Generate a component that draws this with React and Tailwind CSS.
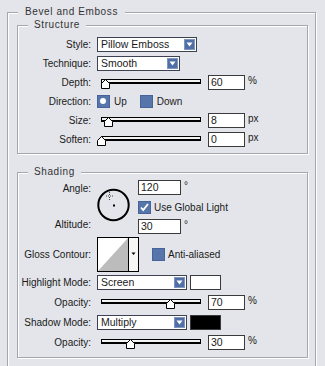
import React from 'react';

// Photoshop "Bevel and Emboss" layer style panel

const GroupBox = ({ title, titleClass, className, children }) => (
	<div className={`relative border border-[#a4a8ae] shadow-[inset_1px_1px_0_#fff,1px_1px_0_#fff] ${className}`}>
		<span className={`absolute left-[10px] top-[-7px] bg-[#e3e5ea] text-[10px] leading-[12px] tracking-[0.6px] text-[#333] ${titleClass}`}>
			{title}
		</span>
		{children}
	</div>
);

const Label = ({ children }) => (
	<span className="w-[73px] shrink-0 text-right text-[10px] leading-[12px] text-[#1a1a1a]">{children}</span>
);

const ArrowButton = () => (
	<svg width="11" height="11" viewBox="0 0 11 11" className="mr-[1px] shrink-0">
		<rect x="0" y="0" width="11" height="11" fill="#4f6fa6" />
		<rect x="0.5" y="0.5" width="10" height="10" fill="none" stroke="#7d96c0" />
		<path d="M2.5 3.5 H8.5 L5.5 7.5 Z" fill="#fff" />
	</svg>
);

const Select = ({ value, width }) => (
	<div className={`flex h-[15px] items-center border border-[#3c4252] bg-white ${width}`}>
		<span className="flex-1 pl-[3px] text-[10.5px] leading-[13px] text-[#1a1a1a]">{value}</span>
		<ArrowButton />
	</div>
);

const NumInput = ({ value, width }) => (
	<div className={`h-[15px] shrink-0 border border-[#3a3a3a] bg-white pl-[2px] text-[10.5px] leading-[13px] text-[#1a1a1a] ${width}`}>
		{value}
	</div>
);

const Slider = ({ pos }) => (
	<div className="relative h-[15px] w-[108px] shrink-0">
		<div className="ml-[4px] mt-[4px] h-[5px] w-[100px] border border-b-2 border-black bg-[#f3f3f3]" />
		<svg className="absolute top-[4px]" style={{ left: pos }} width="9" height="10" viewBox="0 0 9 10">
			<path d="M4.5 0.5 L8.5 4.5 V9.5 H0.5 V4.5 Z" fill="#fff" stroke="#000" />
		</svg>
	</div>
);

const Unit = ({ children }) => (
	<span className="ml-[3px] self-start text-[10px] leading-[12px] text-[#1a1a1a]">{children}</span>
);

const BlueBox = ({ children }) => (
	<svg width="13" height="13" viewBox="0 0 13 13" className="shrink-0">
		<rect x="0" y="0" width="13" height="13" fill="#5675aa" />
		<rect x="0.5" y="0.5" width="12" height="12" fill="none" stroke="#46639a" />
		{children}
	</svg>
);

const SliderRow = ({ label, pos, value, unit }) => (
	<div className="flex h-[15px] items-center gap-[6px]">
		<Label>{label}</Label>
		<div className="flex items-center">
			<Slider pos={pos} />
			<div className="ml-[3px]">
				<NumInput value={value} width="w-[37px]" />
			</div>
			<Unit>{unit}</Unit>
		</div>
	</div>
);

const AngleDial = () => (
	<svg width="33" height="34" viewBox="0 0 33 34">
		<circle cx="16.5" cy="17" r="15.2" fill="none" stroke="#000" strokeWidth="2" />
		<rect x="16" y="16.5" width="2" height="2" fill="#000" />
		<path d="M12.5 4 V7 M12.5 9 V12 M9 8 H12 M13 8 H16" stroke="#444" strokeWidth="1" strokeDasharray="1 1" />
	</svg>
);

const ContourBox = () => (
	<svg width="42" height="35" viewBox="0 0 42 35" className="shrink-0">
		<rect x="0.5" y="0.5" width="41" height="34" fill="#fff" stroke="#000" />
		<path d="M1 34 L31 1 V34 Z" fill="#bcbcbc" />
		<path d="M31.5 0.5 V34.5" stroke="#000" />
		<rect x="32" y="1" width="9" height="33" fill="#f6f6f6" />
		<path d="M34.5 15.5 H38.5 L36.5 18 Z" fill="#000" />
	</svg>
);

const Swatch = ({ color }) => (
	<div className={`ml-[3px] h-[15px] w-[31px] border border-[#3a3a3a] ${color}`} />
);

const App = () => {
	return (
		<div className="h-[366px] overflow-hidden bg-[#e3e5ea] pl-[7px] pt-[12px] font-['Liberation_Sans',Arial,sans-serif]">
			<GroupBox title="Bevel and Emboss" titleClass="px-[7px]" className="w-[309px] pl-[9px] pt-[12px] pb-[20px]">
				<GroupBox title="Structure" titleClass="px-[6px]" className="w-[291px] pt-[11px] pb-[6px]">
					<div className="flex flex-col gap-[4px]">
						<div className="flex h-[15px] items-center gap-[6px]">
							<Label>Style:</Label>
							<Select value="Pillow Emboss" width="w-[100px]" />
						</div>
						<div className="flex h-[15px] items-center gap-[6px]">
							<Label>Technique:</Label>
							<Select value="Smooth" width="w-[83px]" />
						</div>
						<SliderRow label="Depth:" pos={4} value="60" unit="%" />
						<div className="flex h-[15px] items-center gap-[6px]">
							<Label>Direction:</Label>
							<div className="flex items-center">
								<BlueBox>
									<circle cx="6" cy="6" r="3" fill="#fff" />
								</BlueBox>
								<span className="ml-[4px] text-[10px] leading-[12px] text-[#1a1a1a]">Up</span>
								<span className="ml-[13px]">
									<BlueBox />
								</span>
								<span className="ml-[4px] text-[10px] leading-[12px] text-[#1a1a1a]">Down</span>
							</div>
						</div>
						<SliderRow label="Size:" pos={7} value="8" unit="px" />
						<SliderRow label="Soften:" pos={0} value="0" unit="px" />
					</div>
				</GroupBox>

				<GroupBox title="Shading" titleClass="px-[6px]" className="mt-[18px] w-[291px] pt-[7px] pb-[7px]">
					<div className="flex">
						<div className="flex h-[53px] w-[73px] shrink-0 flex-col justify-between pt-[3px] pb-[2px] text-right text-[10px] leading-[12px] text-[#1a1a1a]">
							<span>Angle:</span>
							<span>Altitude:</span>
						</div>
						<div className="ml-[6px] mt-[8px]">
							<AngleDial />
						</div>
						<div className="ml-[8px] flex flex-col">
							<div className="flex">
								<NumInput value="120" width="w-[43px]" />
								<Unit>°</Unit>
							</div>
							<div className="mt-[6px] flex items-center">
								<BlueBox>
									<path d="M3 6.5 L5.2 9 L10 3" fill="none" stroke="#fff" strokeWidth="1.8" />
								</BlueBox>
								<span className="ml-[3px] text-[10px] leading-[12px] text-[#1a1a1a]">Use Global Light</span>
							</div>
							<div className="mt-[5px] flex">
								<NumInput value="30" width="w-[43px]" />
								<Unit>°</Unit>
							</div>
						</div>
					</div>

					<div className="mt-[3px] flex h-[35px] items-center gap-[6px]">
						<Label>Gloss Contour:</Label>
						<ContourBox />
						<span className="ml-[7px]">
							<BlueBox />
						</span>
						<span className="ml-[-3px] text-[10px] leading-[12px] text-[#1a1a1a]">Anti-aliased</span>
					</div>

					<div className="mt-[3px] flex flex-col gap-[5px]">
						<div className="flex h-[15px] items-center gap-[6px]">
							<Label>Highlight Mode:</Label>
							<div className="flex items-center">
								<Select value="Screen" width="w-[90px]" />
								<Swatch color="bg-white" />
							</div>
						</div>
						<SliderRow label="Opacity:" pos={69} value="70" unit="%" />
						<div className="flex h-[15px] items-center gap-[6px]">
							<Label>Shadow Mode:</Label>
							<div className="flex items-center">
								<Select value="Multiply" width="w-[90px]" />
								<Swatch color="bg-black" />
							</div>
						</div>
						<SliderRow label="Opacity:" pos={29} value="30" unit="%" />
					</div>
				</GroupBox>
			</GroupBox>
		</div>
	);
};

export default App;
